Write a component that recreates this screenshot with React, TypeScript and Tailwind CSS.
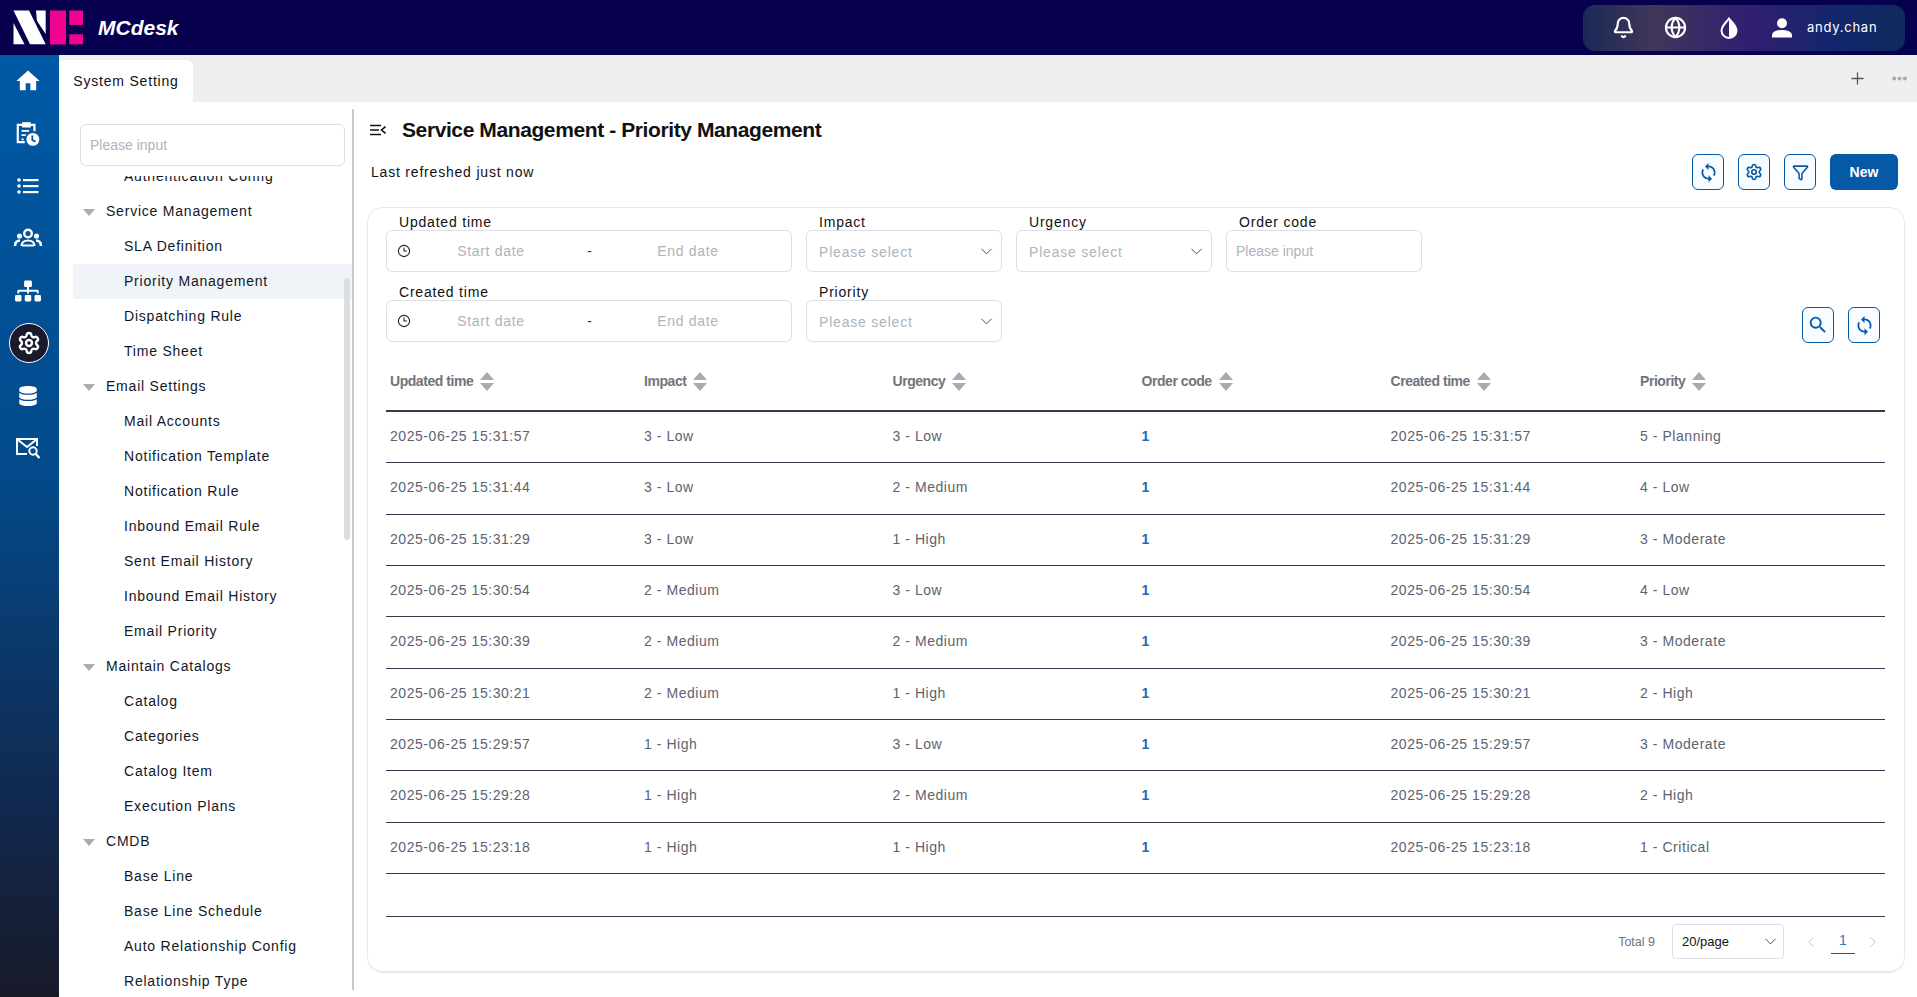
import React from "react";
import { ChevronDown, ChevronLeft, ChevronRight, Plus, Settings, Filter, Globe, Bell } from "lucide-react";
import { MdHome, MdSync, MdSearch } from "react-icons/md";
import { FaSitemap, FaDatabase } from "react-icons/fa";

const sans = "font-['Liberation_Sans',Arial,sans-serif]";

function Logo() {
  return (
    <svg width="71" height="35" viewBox="13 10 71 35" className="ml-[13px]">
      <polygon fill="#fff" points="13.5,10.5 29,10.5 45.7,44.3 30,44.3" />
      <polygon fill="#fff" points="13.5,23 24.5,44.3 13.5,44.3" />
      <polygon fill="#fff" points="36,10.5 45.7,10.5 45.7,34 37,21" />
      <rect fill="#f0048f" x="50" y="10.5" width="16" height="34" />
      <rect fill="#f0048f" x="69.3" y="10.5" width="13.7" height="14.5" />
      <rect fill="#f0048f" x="69.3" y="34.3" width="13.7" height="10" />
    </svg>
  );
}

function ClipboardClock() {
  return (
    <svg width="26" height="28" viewBox="0 0 24 26" fill="none" stroke="#fff" strokeWidth="2">
      <path d="M9 20.5H2.5V4.5H18v6" />
      <path d="M7 2.5h7v4H7z" fill="#fff" strokeWidth="1" />
      <path d="M6 10h7M6 14h4M6 18h2" strokeWidth="1.6" />
      <circle cx="16.5" cy="18" r="6" fill="#fff" stroke="none" />
      <path d="M16 14.5v4l3 1.6" stroke="#045097" strokeWidth="1.6" />
    </svg>
  );
}

function ListIcon() {
  return (
    <svg width="22" height="18" viewBox="0 0 22 18" fill="#fff">
      <circle cx="2" cy="3" r="1.8" />
      <circle cx="2" cy="9" r="1.8" />
      <circle cx="2" cy="15" r="1.8" />
      <rect x="6" y="2" width="15.5" height="2.2" />
      <rect x="6" y="8" width="15.5" height="2.2" />
      <rect x="6" y="14" width="15.5" height="2.2" />
    </svg>
  );
}

function PeopleIcon() {
  return (
    <svg width="28" height="20" viewBox="0 0 28 20" fill="none">
      <circle cx="14" cy="5.5" r="3.8" stroke="#fff" strokeWidth="2.4" />
      <circle cx="5.5" cy="8" r="2.6" fill="#fff" />
      <circle cx="22.5" cy="8" r="2.6" fill="#fff" />
      <path d="M1 18c0-3.5 2-5.5 5-5.5M27 18c0-3.5-2-5.5-5-5.5" stroke="#fff" strokeWidth="2.6" />
      <path d="M7.5 18c0-3.5 3-5.5 6.5-5.5s6.5 2 6.5 5.5" stroke="#fff" strokeWidth="2.2" />
      <rect x="8" y="16.5" width="12" height="2" fill="#fff" />
    </svg>
  );
}

function MailSearch() {
  return (
    <svg width="26" height="22" viewBox="0 0 26 22" fill="none" stroke="#fff" strokeWidth="2">
      <path d="M12 17H2V2h20v7" />
      <path d="M2.5 2.5 12 10l9.5-7.5" />
      <circle cx="18" cy="14" r="3.7" />
      <path d="m20.8 17 3.7 4" strokeWidth="2.4" />
    </svg>
  );
}

function Drop() {
  return (
    <svg width="18" height="22" viewBox="0 0 18 22">
      <path d="M9 1.5C6.5 5 1.5 9 1.5 13.5a7.5 7.5 0 0 0 15 0C16.5 9 11.5 5 9 1.5Z" fill="none" stroke="#fff" strokeWidth="2" />
      <path d="M9 1.5C11.5 5 16.5 9 16.5 13.5A7.5 7.5 0 0 1 9 21Z" fill="#fff" />
    </svg>
  );
}

function UserSolid() {
  return (
    <svg width="20" height="20" viewBox="0 0 20 20" fill="#fff">
      <circle cx="10" cy="5.2" r="5" />
      <path d="M0 19.5v-2.2c0-3.6 5-5.3 10-5.3s10 1.7 10 5.3v2.2Z" />
    </svg>
  );
}

function Clock() {
  return (
    <svg width="14" height="14" viewBox="0 0 14 14" fill="none" stroke="#222" strokeWidth="1.1">
      <circle cx="7" cy="7" r="5.6" />
      <path d="M7 3.6V7h3" />
    </svg>
  );
}

function Sort() {
  return (
    <svg width="14" height="19" viewBox="0 0 14 19" fill="#a8abb2">
      <polygon points="7,0 14,8 0,8" />
      <polygon points="0,11 14,11 7,19" />
    </svg>
  );
}

function Rail() {
  const base = "h-[52.4px] flex items-center justify-center";
  return (
    <div className="w-[59px] shrink-0 pr-[3px] flex flex-col bg-[linear-gradient(180deg,#0059a6_0%,#034a8a_45%,#12264a_82%,#191a28_100%)]">
      <div className={base}><MdHome size={28} color="#fff" /></div>
      <div className={base}><ClipboardClock /></div>
      <div className={base}><ListIcon /></div>
      <div className={base}><PeopleIcon /></div>
      <div className={base}><FaSitemap size={26} color="#fff" /></div>
      <div className={base}>
        <div className="ml-[2px] w-[40px] h-[40px] rounded-full bg-[#1a1a2e] border border-white flex items-center justify-center">
          <Settings size={24} color="#fff" strokeWidth={2.4} />
        </div>
      </div>
      <div className={base}><FaDatabase size={20} color="#fff" /></div>
      <div className={base}><MailSearch /></div>
    </div>
  );
}

const groups: { title: string; items: string[] }[] = [
  { title: "Service Management", items: ["SLA Definition", "Priority Management", "Dispatching Rule", "Time Sheet"] },
  { title: "Email Settings", items: ["Mail Accounts", "Notification Template", "Notification Rule", "Inbound Email Rule", "Sent Email History", "Inbound Email History", "Email Priority"] },
  { title: "Maintain Catalogs", items: ["Catalog", "Categories", "Catalog Item", "Execution Plans"] },
  { title: "CMDB", items: ["Base Line", "Base Line Schedule", "Auto Relationship Config", "Relationship Type"] },
];

function Sidebar() {
  return (
    <div className="w-[295px] shrink-0 pt-[7px] pb-[7px] h-full">
      <div className="relative h-full border-r-2 border-[#c9c9c9] flex flex-col pt-[15px]">
        <div className="ml-[21px] mr-[7px] h-[42px] shrink-0 border border-[#dcdfe6] rounded-[6px] flex items-center pl-[9px] text-[14px] text-[#b0b3bb]">Please input</div>
        <div className="flex-1 overflow-hidden mt-[10px] text-[14px] tracking-[0.78px] text-[#111827]">
          <div className="h-[35px] -mt-[17px] pl-[51px] ml-[14px] flex items-center">Authentication Config</div>
          {groups.map((g) => (
            <div key={g.title}>
              <div className="h-[35px] flex items-center pl-[24px]">
                <svg width="12" height="7" viewBox="0 0 12 7" fill="#a8abb2" className="mr-[10px] mt-[2px]"><polygon points="0,0 12,0 6,7" /></svg>
                <span className="ml-[1px]">{g.title}</span>
              </div>
              {g.items.map((i) => (
                <div key={i} className={`h-[35px] flex items-center ml-[14px] pl-[51px] ${i === "Priority Management" ? "bg-[#f0f4f8]" : ""}`}>{i}</div>
              ))}
            </div>
          ))}
        </div>
        <div className="absolute right-[2px] top-[169px] w-[6px] h-[262px] rounded-full bg-[#dcdde0]" />
      </div>
    </div>
  );
}

function Field({ label, w, children }: { label: string; w: string; children: React.ReactNode }) {
  return (
    <div className={w}>
      <div className="h-[16px] leading-[16px] pl-[13px] text-[14px] tracking-[0.8px] text-[#111]">{label}</div>
      <div className="h-[42px] border border-[#dcdfe6] rounded-[6px] flex items-center text-[14px] text-[#b0b3bb]">{children}</div>
    </div>
  );
}

function DateField({ label }: { label: string }) {
  return (
    <Field label={label} w="w-[406px]">
      <div className="pl-[10px] flex items-center tracking-[0.7px] w-full">
        <Clock />
        <span className="ml-[9px] w-[142px] text-center">Start date</span>
        <span className="w-[56px] text-center text-[#333]">-</span>
        <span className="w-[140px] text-center">End date</span>
      </div>
    </Field>
  );
}

function SelectField({ label }: { label: string }) {
  return (
    <Field label={label} w="w-[196px]">
      <div className="pl-[12px] pr-[5px] flex items-center justify-between w-full tracking-[0.8px]">
        <span className="mt-[2px]">Please select</span>
        <ChevronDown size={19} color="#444" strokeWidth={1.2} />
      </div>
    </Field>
  );
}

function IconBtn({ children }: { children: React.ReactNode }) {
  return (
    <div className="w-[32px] h-[36px] rounded-[6px] border border-[#0559a6] bg-[#f8fbff] flex items-center justify-center text-[#0559a6]">
      {children}
    </div>
  );
}

const columns = ["Updated time", "Impact", "Urgency", "Order code", "Created time", "Priority"];
const rows = [
  ["2025-06-25 15:31:57", "3 - Low", "3 - Low", "5 - Planning"],
  ["2025-06-25 15:31:44", "3 - Low", "2 - Medium", "4 - Low"],
  ["2025-06-25 15:31:29", "3 - Low", "1 - High", "3 - Moderate"],
  ["2025-06-25 15:30:54", "2 - Medium", "3 - Low", "4 - Low"],
  ["2025-06-25 15:30:39", "2 - Medium", "2 - Medium", "3 - Moderate"],
  ["2025-06-25 15:30:21", "2 - Medium", "1 - High", "2 - High"],
  ["2025-06-25 15:29:57", "1 - High", "3 - Low", "3 - Moderate"],
  ["2025-06-25 15:29:28", "1 - High", "2 - Medium", "2 - High"],
  ["2025-06-25 15:23:18", "1 - High", "1 - High", "1 - Critical"],
];
const grid = "grid grid-cols-[254px_248.5px_249px_249px_249.5px_1fr]";

function Table() {
  return (
    <div className="mt-[23px] mr-[19px]">
      <div className={`${grid} h-[47px] border-b-2 border-[#333d4d] pb-[12px] items-center`}>
        {columns.map((c) => (
          <div key={c} className="pl-[4px] flex items-center gap-[7px] text-[14px] font-bold tracking-[-0.45px] text-[#70747c]">
            {c}
            <Sort />
          </div>
        ))}
      </div>
      {rows.map((r, i) => (
        <div key={i} className={`${grid} h-[51.33px] border-b border-[#333d4d] pb-[1px] items-center text-[14px] tracking-[0.55px] text-[#5c6370]`}>
          <div className="pl-[4px]">{r[0]}</div>
          <div className="pl-[4px]">{r[1]}</div>
          <div className="pl-[4px]">{r[2]}</div>
          <div className="pl-[4px] font-bold text-[#1a6bb8]">1</div>
          <div className="pl-[4px]">{r[0]}</div>
          <div className="pl-[4px]">{r[3]}</div>
        </div>
      ))}
      <div className="h-[43px] border-b border-[#333d4d]" />
    </div>
  );
}

function Pagination() {
  return (
    <div className="flex items-center justify-end h-[34px] mt-[8px] mr-[22px]">
      <span className="text-[12.5px] text-[#6b7280] mr-[17px]">Total 9</span>
      <div className="w-[112px] h-[35px] border border-[#dcdfe6] rounded-[4px] flex items-center justify-between pl-[9px] pr-[3px] text-[13px] text-[#111]">
        20/page
        <ChevronDown size={19} color="#444" strokeWidth={1.2} />
      </div>
      <ChevronLeft size={18} color="#c0c4cc" strokeWidth={1.3} className="ml-[18px]" />
      <div className="w-[24px] ml-[11px] h-[24px] border-b border-[#0559a6] text-center text-[14px] leading-[20px] text-[#1a7bc8]">1</div>
      <ChevronRight size={18} color="#c0c4cc" strokeWidth={1.3} className="ml-[9px]" />
    </div>
  );
}

function Main() {
  return (
    <div className="flex-1 min-w-0 pl-[14px] pr-[12px] flex flex-col">
      <div className="h-[28px] mt-[14px] flex items-center pl-[2px]">
        <svg width="16" height="12" viewBox="0 0 16 12" fill="none" stroke="#111" strokeWidth="1.6">
          <path d="M0 1.5h11M0 6h9M0 10.5h11M15.5 2.5 11.5 6l4 3.5" />
        </svg>
        <span className="ml-[16px] text-[21px] font-bold tracking-[-0.4px] text-[#111]">Service Management - Priority Management</span>
      </div>
      <div className="flex items-start justify-between mt-[10px] pr-[7px] h-[53px]">
        <span className="pl-[3px] mt-[8px] text-[14px] tracking-[0.8px] text-[#111]">Last refreshed just now</span>
        <div className="flex items-center gap-[14px]">
          <IconBtn><MdSync size={21} /></IconBtn>
          <IconBtn><Settings size={18} strokeWidth={2.2} /></IconBtn>
          <IconBtn><Filter size={17} strokeWidth={2.2} /></IconBtn>
          <div className="w-[68px] h-[36px] rounded-[6px] bg-[#0559a6] text-white font-bold text-[14px] flex items-center justify-center">New</div>
        </div>
      </div>
      <div className="h-[766px] -ml-px border border-[#e8e9ee] border-b-2 rounded-[16px] pt-[6px] pl-[18px]">
        <div className="flex items-end justify-between pr-[24px]">
          <div className="flex flex-col gap-[12px]">
            <div className="flex gap-[14px]">
              <DateField label="Updated time" />
              <SelectField label="Impact" />
              <SelectField label="Urgency" />
              <Field label="Order code" w="w-[196px]"><span className="pl-[9px]">Please input</span></Field>
            </div>
            <div className="flex gap-[14px]">
              <DateField label="Created time" />
              <SelectField label="Priority" />
            </div>
          </div>
          <div className="flex gap-[14px] -mb-px">
            <IconBtn><MdSearch size={22} /></IconBtn>
            <IconBtn><MdSync size={21} /></IconBtn>
          </div>
        </div>
        <Table />
        <Pagination />
      </div>
    </div>
  );
}

export default function App() {
  return (
    <div className={`${sans} w-screen h-screen overflow-hidden flex flex-col bg-white`}>
      <div className="h-[55px] shrink-0 bg-[#06004f] flex items-center justify-between pr-[12px]">
        <div className="flex items-center">
          <Logo />
          <span className="ml-[14px] text-[21px] font-bold italic text-white tracking-[0px]">MCdesk</span>
        </div>
        <div className="w-[322px] h-[46px] rounded-[12px] flex items-center pl-[29px] bg-[linear-gradient(90deg,#1a2958,#40375a_22%,#331e70_50%,#13266d_78%,#102a5c)] text-white">
          <Bell size={23} strokeWidth={2.2} />
          <Globe size={23} strokeWidth={2.2} className="ml-[29px]" />
          <div className="ml-[33px]"><Drop /></div>
          <div className="ml-[34px]"><UserSolid /></div>
          <span className="ml-[15px] font-['Inter',sans-serif] text-[13px] tracking-[0.75px]">andy.chan</span>
        </div>
      </div>
      <div className="flex-1 min-h-0 flex">
        <Rail />
        <div className="flex-1 min-w-0 flex flex-col">
          <div className="h-[47px] shrink-0 bg-[#efefef] flex items-end justify-between">
            <div className="w-[134px] h-[42px] bg-white rounded-t-[6px] flex items-center justify-center text-[14px] tracking-[0.8px] text-[#111]">System Setting</div>
            <div className="flex items-center h-full pr-[10px] gap-[25px] text-[#555]">
              <Plus size={19} strokeWidth={1.6} />
              <svg width="15" height="5" viewBox="0 0 15 5" fill="#a8abb2"><circle cx="2.2" cy="2.5" r="2" /><circle cx="7.5" cy="2.5" r="2" /><circle cx="12.8" cy="2.5" r="2" /></svg>
            </div>
          </div>
          <div className="flex-1 min-h-0 flex">
            <Sidebar />
            <Main />
          </div>
        </div>
      </div>
    </div>
  );
}
